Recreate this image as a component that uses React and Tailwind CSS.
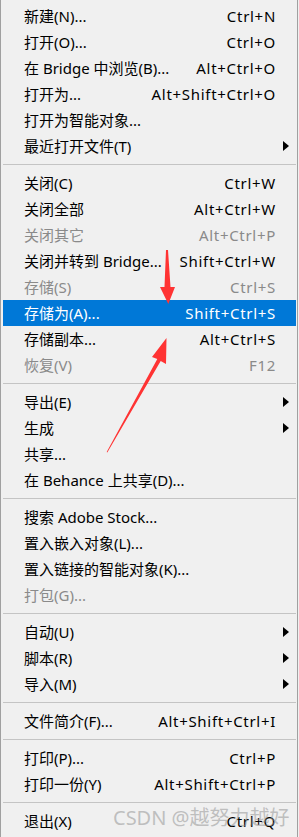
const sections = [
  [
    { label: "新建(N)...", key: "Ctrl+N" },
    { label: "打开(O)...", key: "Ctrl+O" },
    { label: "在 Bridge 中浏览(B)...", key: "Alt+Ctrl+O" },
    { label: "打开为...", key: "Alt+Shift+Ctrl+O" },
    { label: "打开为智能对象..." },
    { label: "最近打开文件(T)", sub: true },
  ],
  [
    { label: "关闭(C)", key: "Ctrl+W" },
    { label: "关闭全部", key: "Alt+Ctrl+W" },
    { label: "关闭其它", key: "Alt+Ctrl+P", off: true },
    { label: "关闭并转到 Bridge...", key: "Shift+Ctrl+W" },
    { label: "存储(S)", key: "Ctrl+S", off: true },
    { label: "存储为(A)...", key: "Shift+Ctrl+S", active: true },
    { label: "存储副本...", key: "Alt+Ctrl+S" },
    { label: "恢复(V)", key: "F12", off: true },
  ],
  [
    { label: "导出(E)", sub: true },
    { label: "生成", sub: true },
    { label: "共享..." },
    { label: "在 Behance 上共享(D)..." },
  ],
  [
    { label: "搜索 Adobe Stock..." },
    { label: "置入嵌入对象(L)..." },
    { label: "置入链接的智能对象(K)..." },
    { label: "打包(G)...", off: true },
  ],
  [
    { label: "自动(U)", sub: true },
    { label: "脚本(R)", sub: true },
    { label: "导入(M)", sub: true },
  ],
  [{ label: "文件简介(F)...", key: "Alt+Shift+Ctrl+I" }],
  [
    { label: "打印(P)...", key: "Ctrl+P" },
    { label: "打印一份(Y)", key: "Alt+Shift+Ctrl+P" },
  ],
  [{ label: "退出(X)", key: "Ctrl+Q" }],
];

function Row({ item }) {
  const color = item.active
    ? "bg-[#0078d7] text-white"
    : item.off
    ? "text-[#8a8a8a]"
    : "text-black";
  return (
    <div className={`flex h-[26px] items-center pl-[21px] pr-[7px] leading-[26px] ${color}`}>
      <span className="flex-1 whitespace-nowrap">{item.label}</span>
      {item.key && <span className="whitespace-nowrap tracking-[0.7px]">{item.key}</span>}
      <div className="flex w-[13px] justify-end">
        {item.sub && (
          <svg width="6" height="10" viewBox="0 0 6 10">
            <polygon points="0,0 6,5 0,10" fill="#000" />
          </svg>
        )}
      </div>
    </div>
  );
}

export default function App() {
  return (
    <div className="relative h-[837px] w-[299px] overflow-hidden bg-[#f0f0f0] font-['Noto_Sans','Noto_Sans_CJK_SC',sans-serif] text-[15px]">
      <div className="h-full w-[298px] border-x border-[#a0a0a0] pl-[2px] pr-[1px] pt-[3px]">
        {sections.map((rows, i) => (
          <div key={i}>
            {i > 0 && (
              <div className="flex h-[11px] items-center">
                <div className="h-px w-full bg-[#c4c4c4]" />
              </div>
            )}
            {rows.map((item) => (
              <Row key={item.label} item={item} />
            ))}
          </div>
        ))}
      </div>

      <svg className="pointer-events-none absolute left-0 top-0" width="299" height="837">
        <polygon
          points="166,250 168,250 170.5,287 175,287 168.3,304 160,287 164.5,287"
          fill="#f33"
        />
        <polygon
          points="166.5,338 166,364 160.7,361 107.3,452.5 106.7,452 157.3,359 152,357"
          fill="#f33"
        />
      </svg>

      <div className="pointer-events-none absolute left-[113px] top-[806px] whitespace-nowrap text-[20px] leading-[24px] text-[#8c8c8c]/50">
        CSDN @越努力越好
      </div>
    </div>
  );
}
